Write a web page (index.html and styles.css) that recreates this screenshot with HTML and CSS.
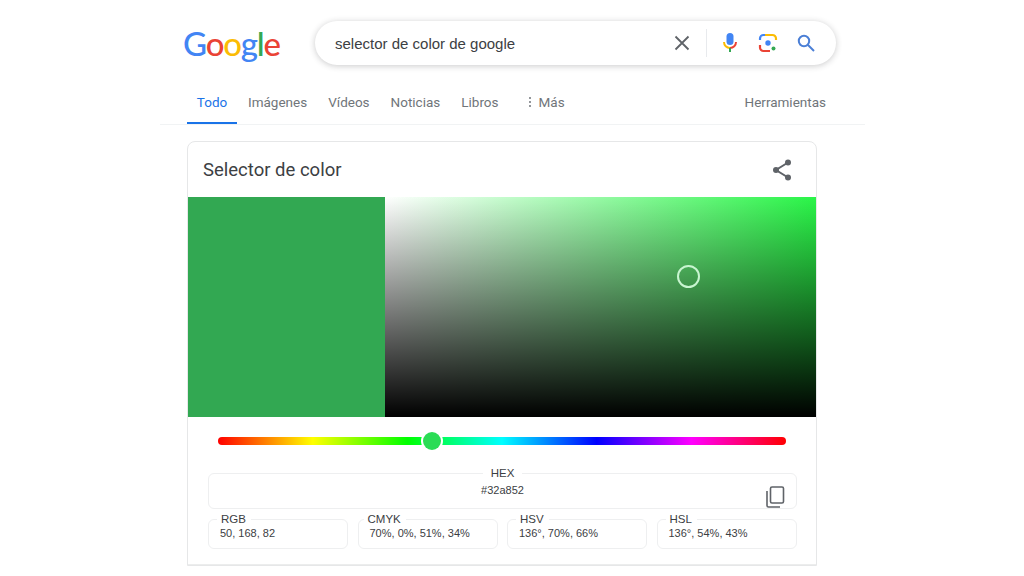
FILE: index.html
```html
<!DOCTYPE html>
<html lang="es">
<head>
  <meta charset="UTF-8">
  <title>selector de color de google</title>
  <meta name="viewport" content="width=device-width, initial-scale=1.0">
  <link rel="stylesheet" href="styles.css">
</head>
<body>
  <header class="top">
    <div class="logo"><span class="g-blue">G</span><span class="g-red">o</span><span class="g-yellow">o</span><span class="g-blue">g</span><span class="g-green">l</span><span class="g-red">e</span></div>
    <div class="search">
      <span class="query">selector de color de google</span>
      <svg class="ico-x" width="16" height="16" viewBox="0 0 16 16"><path d="M1.5 1.5l13 13M14.5 1.5l-13 13" stroke="#5f6368" stroke-width="1.8" fill="none"/></svg>
      <span class="sep"></span>
      <svg class="ico-mic" width="16" height="22" viewBox="0 0 16 22">
        <rect x="4.5" y="1" width="7" height="12" rx="3.5" fill="#4285f4"/>
        <path d="M2 10c0 3.4 2.6 6 6 6" stroke="#fbbc05" stroke-width="2" fill="none"/>
        <path d="M14 10c0 3.4-2.6 6-6 6" stroke="#ea4335" stroke-width="2" fill="none"/>
        <path d="M8 16v4" stroke="#34a853" stroke-width="2"/>
      </svg>
      <svg class="ico-lens" width="20" height="20" viewBox="0 0 20 20" fill="none" stroke-width="2.2">
        <path d="M2 7V5.5A3.5 3.5 0 0 1 5.500 2H7" stroke="#4285f4"/>
        <path d="M7 2l1.500-0 h4L14 2h.5A3.500 3.500 0 0 1 18 5.500V7" stroke="#fbbc05"/>
        <path d="M2 12v2.500A3.500 3.500 0 0 0 5.500 18H12" stroke="#ea4335"/>
        <circle cx="10" cy="10" r="2.700" fill="#4285f4" stroke="none"/>
        <circle cx="15.500" cy="15.500" r="2" fill="#34a853" stroke="none"/>
      </svg>
      <svg class="ico-search" width="20" height="20" viewBox="0 0 20 20" fill="none" stroke="#4b7fd6" stroke-width="2"><circle cx="8" cy="8" r="5.200"/><path d="M12 12l6 6"/></svg>
    </div>
  </header>

  <nav class="tabs">
    <a class="tab active">Todo</a>
    <a class="tab">Imágenes</a>
    <a class="tab">Vídeos</a>
    <a class="tab">Noticias</a>
    <a class="tab">Libros</a>
    <a class="tab more"><span class="dots"></span>Más</a>
    <a class="tab tools">Herramientas</a>
  </nav>

  <main class="card">
    <div class="card-head">
      <h2>Selector de color</h2>
      <svg width="22" height="22" viewBox="0 0 22 22"><path d="M17 3.500L5 11l12 7.500" stroke="#5f6368" stroke-width="2" fill="none"/><circle cx="17" cy="3.500" r="3" fill="#5f6368"/><circle cx="5" cy="11" r="3" fill="#5f6368"/><circle cx="17" cy="18.500" r="3" fill="#5f6368"/></svg>
    </div>

    <div class="picker">
      <div class="swatch"></div>
      <div class="area"><span class="cursor"></span></div>
    </div>

    <div class="hue"><span class="hue-thumb"></span></div>

    <fieldset class="box hex">
      <legend>HEX</legend>
      <span class="val">#32a852</span>
      <svg class="copy" width="20" height="22" viewBox="0 0 20 22" fill="none" stroke="#5f6368" stroke-width="1.600"><rect x="5.500" y="1" width="13" height="16" rx="1.500"/><path d="M2 5v14.500A1.500 1.500 0 0 0 3.500 21H15"/></svg>
    </fieldset>

    <div class="formats">
      <fieldset class="box"><legend>RGB</legend><span class="val">50, 168, 82</span></fieldset>
      <fieldset class="box"><legend class="cmyk">CMYK</legend><span class="val ind">70%, 0%, 51%, 34%</span></fieldset>
      <fieldset class="box"><legend>HSV</legend><span class="val">136°, 70%, 66%</span></fieldset>
      <fieldset class="box"><legend>HSL</legend><span class="val">136°, 54%, 43%</span></fieldset>
    </div>
    <div class="card-foot"></div>
  </main>
</body>
</html>
```

FILE: styles.css
```css
html, body {
  height: 576px;
  overflow: hidden;
}

body {
  margin: 0;
  background: #fff;
  color: #3c4043;
  font-family: Roboto, "Liberation Sans", sans-serif;
}

/* cabecera */
.top {
  display: flex;
  align-items: center;
  padding: 21px 0 0 183px;
  height: 44px;
}

.logo {
  width: 132px;
  font-family: Lato, sans-serif;
  font-size: 33px;
  line-height: 44px;
  letter-spacing: -1.2px;
  font-weight: 500;
}

.g-blue { color: #4285f4; }
.g-red { color: #ea4335; }
.g-yellow { color: #fbbc05; }
.g-green { color: #34a853; }

.search {
  display: flex;
  align-items: center;
  width: 521px;
  height: 44px;
  box-sizing: border-box;
  padding: 0 20px;
  border-radius: 22px;
  background: #fff;
  box-shadow: 0 1px 6px rgba(32, 33, 36, .24);
}

.query {
  flex: 1;
  font-family: "Liberation Sans", sans-serif;
  font-size: 15px;
  color: #3c4043;
}

.ico-x { margin-right: 16px; }

.sep {
  width: 1px;
  height: 28px;
  background: #e8eaed;
  margin-right: 15px;
}

.ico-mic { margin-right: 20px; }
.ico-lens { margin-right: 18px; }

/* pestañas */
.tabs {
  display: flex;
  margin: 17px 159px 0 160px;
  padding-left: 27px;
  height: 42px;
  border-bottom: 1px solid #f1f3f4;
  font-size: 13.500px;
  color: #70757a;
}

.tab {
  height: 40px;
  line-height: 40px;
  margin-right: 21px;
}

.tab.active {
  width: 50px;
  margin-right: 11px;
  text-align: center;
  color: #1a73e8;
  border-bottom: 2px solid #1a73e8;
}

.more {
  display: flex;
  align-items: center;
  margin-left: 5px;
}

.dots {
  width: 2px;
  height: 2px;
  margin: 0 8px 0 4px;
  background: #70757a;
  box-shadow: 0 -4px 0 #70757a, 0 4px 0 #70757a;
  border-radius: 1px;
}

.tools {
  margin-left: auto;
  margin-right: 39px;
}

/* tarjeta */
.card {
  width: 628px;
  margin: 16px 0 0 187px;
  border: 1px solid #e6e7e8;
  border-radius: 8px 8px 0 0;
}

.card-head {
  display: flex;
  align-items: center;
  justify-content: space-between;
  height: 55px;
  padding: 0 23px 0 15px;
}

.card-head h2 {
  margin: 0;
  font-size: 18.500px;
  font-weight: 400;
  color: #3c4043;
}

.picker {
  display: flex;
  height: 220px;
}

.swatch {
  width: 197px;
  background: #32a852;
}

.area {
  position: relative;
  flex: 1;
  background:
    linear-gradient(to bottom, transparent, #000),
    linear-gradient(to right, #fff, #2af548);
}

.cursor {
  position: absolute;
  left: 292px;
  top: 68px;
  width: 19px;
  height: 19px;
  border: 2px solid #c8f5d0;
  border-radius: 50%;
}

.hue {
  position: relative;
  height: 8px;
  margin: 20px 30px 0 30px;
  border-radius: 4px;
  background: linear-gradient(to right, #f00, #ff0, #0f0, #0ff, #00f, #f0f, #f00);
}

.hue-thumb {
  position: absolute;
  left: 205px;
  top: -5px;
  width: 18px;
  height: 18px;
  border-radius: 50%;
  background: #2bdc55;
  box-shadow: 0 0 0 2px #fff;
}

.box {
  margin: 0;
  padding: 0;
  min-width: 0;
  height: 36px;
  box-sizing: border-box;
  border: 1px solid #eeeff0;
  border-radius: 6px;
  font-family: "Liberation Sans", sans-serif;
  font-size: 11px;
  color: #3c4043;
}

.box legend {
  margin-left: 8px;
  padding: 0 5px 0 4px;
  line-height: 12px;
  font-size: 11.500px;
}

.box .cmyk {
  margin-left: 5px;
}

.val {
  display: block;
  padding-left: 11px;
  line-height: 14px;
  margin-top: 1px;
}

.val.ind {
  padding-left: 11px;
}

.hex {
  position: relative;
  margin: 22px 19px 0 20px;
  height: 42px;
  padding-top: 0;
  text-align: center;
}

.hex legend {
  margin: 0 auto;
  padding: 0 8px;
}

.hex .val {
  padding: 3px 0 0;
}

.copy {
  position: absolute;
  right: 11px;
  top: 7px;
}

.formats {
  display: grid;
  grid-template-columns: repeat(4, 140px);
  column-gap: 9.500px;
  margin: 4px 0 0 20px;
}

.card-foot {
  height: 15px;
  border-bottom: 1px solid #eceded;
}
```
